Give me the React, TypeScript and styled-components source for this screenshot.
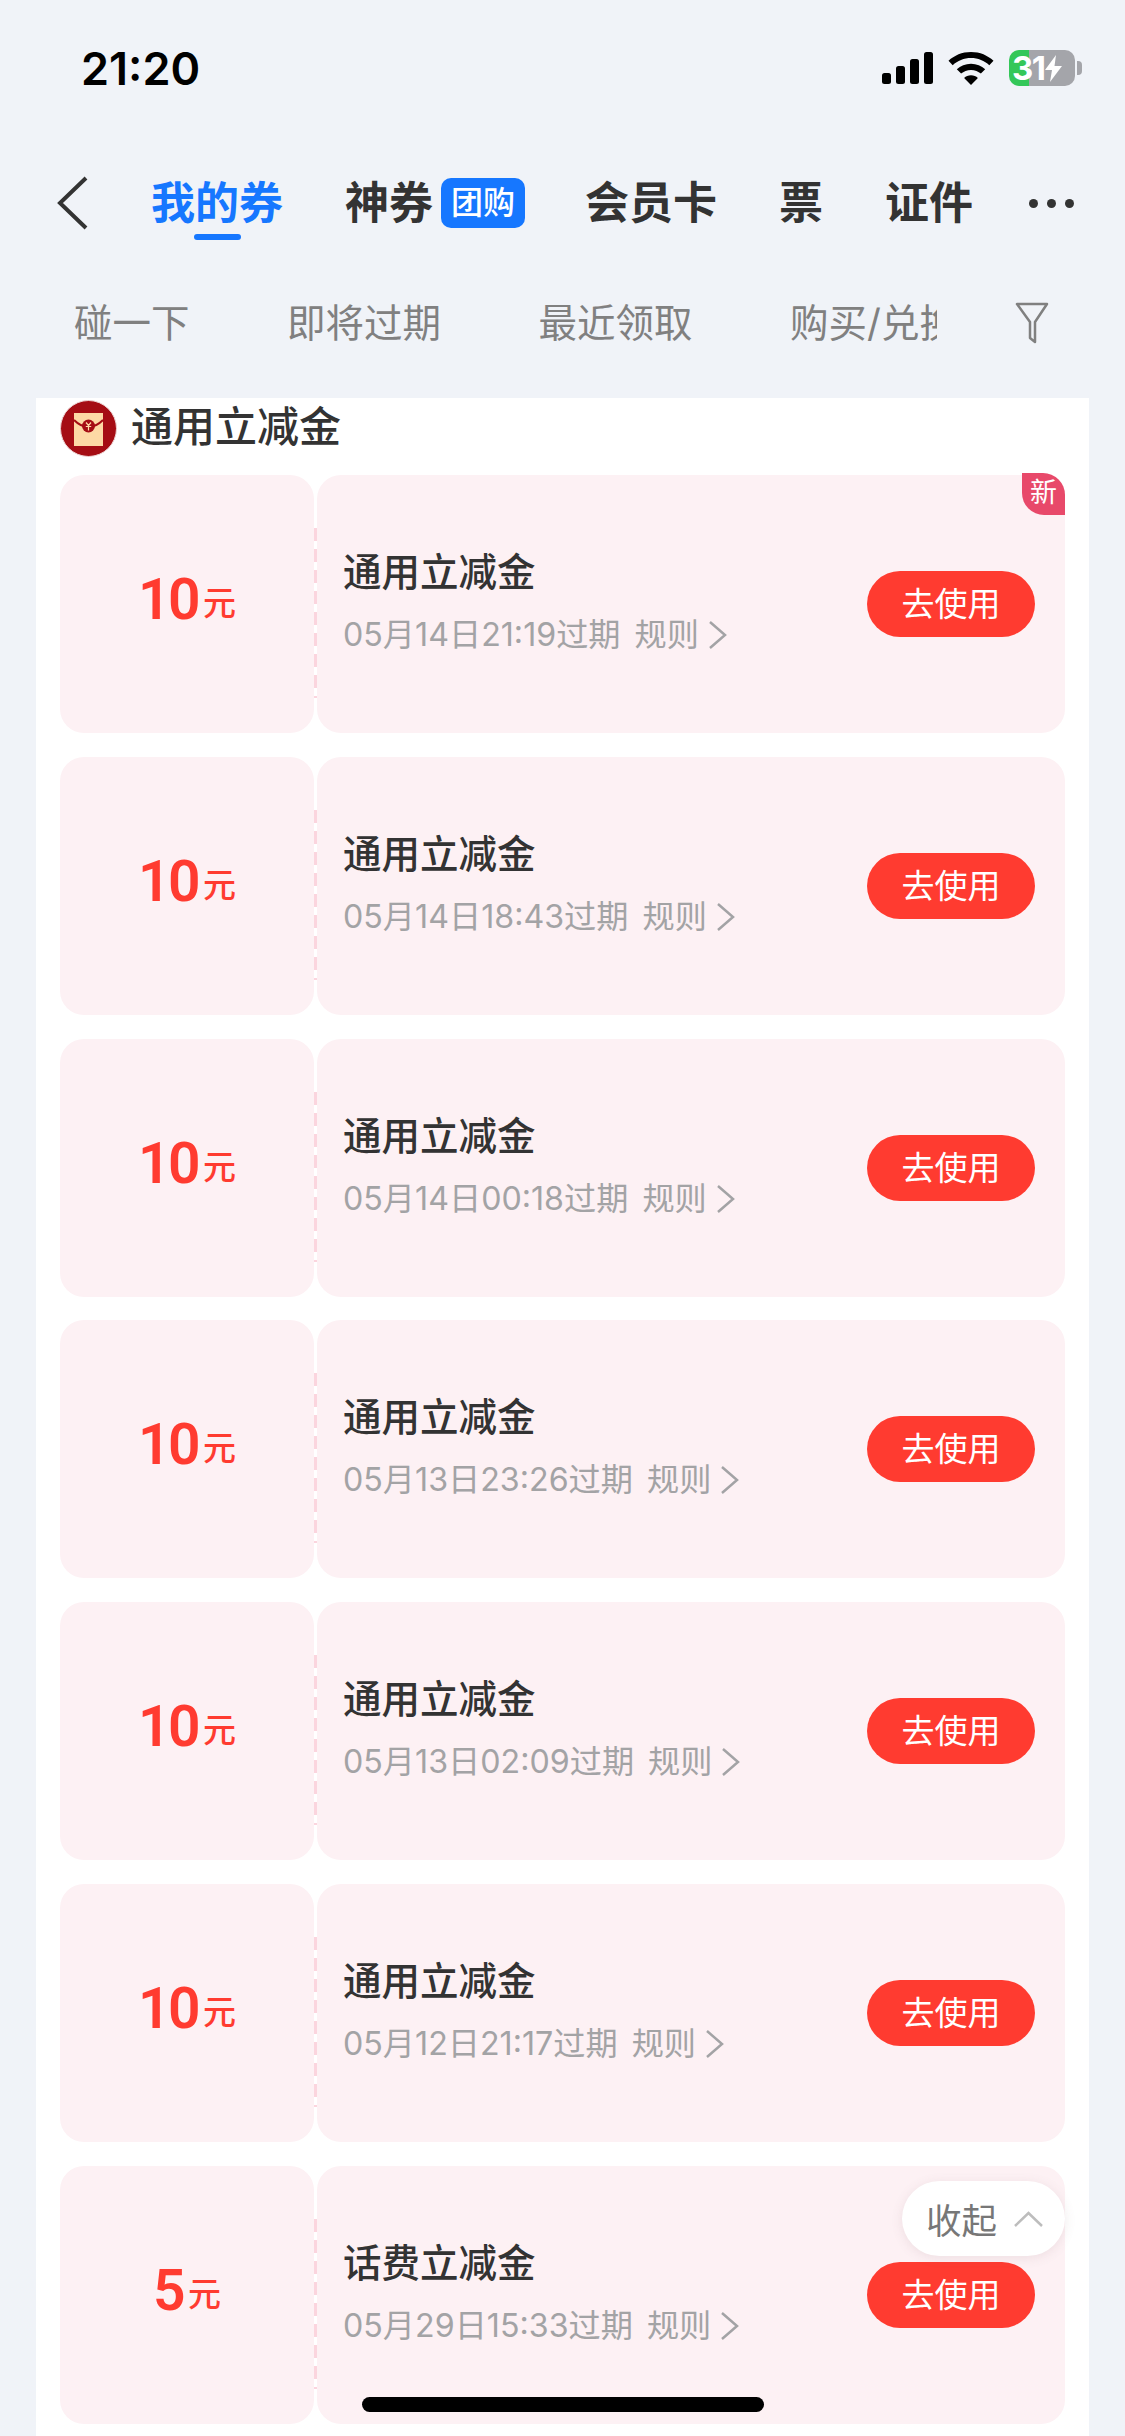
import React from 'react';
import styled, { createGlobalStyle } from 'styled-components';

const GlobalStyle = createGlobalStyle`
  html, body {
    margin: 0;
    padding: 0;
    background: #f0f3f8;
    font-family: Inter, "Noto Sans CJK SC", sans-serif;
  }
`;

const Page = styled.div`
  position: relative;
  width: 1125px;
  height: 2436px;
  overflow: hidden;
  background: #f0f3f8;
`;

const StatusBar = styled.div`
  height: 136px;
  display: flex;
  align-items: center;
  padding: 0 43px 0 81px;
  box-sizing: border-box;
`;

const Time = styled.div`
  flex: 1;
  font-size: 45px;
  font-weight: 600;
  color: #000;
`;

const StatusIcons = styled.div`
  display: flex;
  align-items: center;
  gap: 15px;
`;

const BatteryGroup = styled.div`
  display: flex;
  align-items: center;
`;

const Battery = styled.div`
  width: 66px;
  height: 36px;
  border-radius: 10px;
  display: flex;
  align-items: center;
  background: linear-gradient(90deg, #34c759 0 20px, #a4a5aa 20px);
  color: #fff;
  font-size: 33px;
  font-weight: 700;
  line-height: 36px;
  padding-left: 3px;
  box-sizing: border-box;
  letter-spacing: -1.500px;
`;

const BatteryNub = styled.div`
  width: 5px;
  height: 14px;
  margin-left: 2px;
  border-radius: 0 4px 4px 0;
  background: #a4a5aa;
`;

const Nav = styled.div`
  height: 134px;
  display: flex;
  align-items: center;
  padding-left: 56px;
`;

const BackButton = styled.div`
  display: flex;
  width: 95px;
`;

const NavTabs = styled.div`
  display: flex;
  align-items: center;
  gap: 62px;
`;

const NavTab = styled.div<{ $active?: boolean }>`
  position: relative;
  display: flex;
  align-items: center;
  font-size: 44px;
  font-weight: 700;
  line-height: 60px;
  color: ${(p) => (p.$active ? '#1677ff' : '#333')};
  ${(p) =>
    p.$active &&
    `
    &::after {
      content: "";
      position: absolute;
      left: 43px;
      bottom: -7px;
      width: 47px;
      height: 6px;
      border-radius: 3px;
      background: #1677ff;
    }
  `}
`;

const GroupBadge = styled.span`
  width: 84px;
  height: 50px;
  margin: 0 -2px 0 8px;
  border-radius: 10px;
  background: #1677ff;
  color: #fff;
  font-size: 32px;
  font-weight: 500;
  line-height: 50px;
  text-align: center;
`;

const MoreDots = styled.div`
  display: flex;
  gap: 9px;
  margin-left: -6px;
`;

const Dot = styled.span`
  width: 9px;
  height: 9px;
  border-radius: 50%;
  background: #333;
`;

const SubBar = styled.div`
  height: 106px;
  display: flex;
  align-items: center;
  padding-left: 74px;
`;

const SubTabs = styled.div`
  width: 863px;
  display: flex;
  gap: 97.500px;
  overflow: hidden;
  white-space: nowrap;
`;

const SubTab = styled.span`
  flex: none;
  font-size: 38.500px;
  line-height: 54px;
  color: #808080;
`;

const FilterButton = styled.div`
  display: flex;
  margin-left: 78px;
`;

const Panel = styled.div`
  margin: 22px 36px 0;
  padding: 0 24px;
  height: 2100px;
  background: #fff;
`;

const GroupHeader = styled.div`
  height: 77px;
  padding: 2px 0 18px;
  box-sizing: border-box;
  display: flex;
  align-items: center;
  gap: 14px;
`;

const GroupTitle = styled.div`
  font-size: 42px;
  font-weight: 500;
  line-height: 52px;
  margin-top: -3px;
  color: #333;
`;

const CardList = styled.div`
  display: flex;
  flex-direction: column;
  gap: 23.830px;
`;

const Card = styled.div`
  position: relative;
  height: 258px;
  display: grid;
  grid-template-columns: 254px 1fr;
  column-gap: 3px;
`;

const AmountCell = styled.div`
  display: flex;
  align-items: center;
  justify-content: center;
  border-radius: 24px;
  background: #fdf1f4;
  color: #ff3b30;
`;

const AmountRow = styled.div`
  display: flex;
  align-items: flex-end;
  margin-top: -8px;
`;

const AmountValue = styled.span`
  font-family: Roboto, sans-serif;
  font-size: 57px;
  font-weight: 600;
  line-height: 70px;
  letter-spacing: -2.500px;
`;

const AmountUnit = styled.span`
  font-size: 33px;
  font-weight: 500;
  line-height: 44px;
  margin: 0 0 10px 5px;
`;

const InfoCell = styled.div`
  position: relative;
  display: flex;
  align-items: center;
  justify-content: space-between;
  padding: 0 30px 0 26px;
  border-radius: 24px;
  background: #fdf1f4;

  &::before {
    content: "";
    position: absolute;
    left: -3px;
    top: 53px;
    bottom: 35px;
    width: 3px;
    background: repeating-linear-gradient(180deg, #fbd5de 0 13px, transparent 13px 21px);
  }
`;

const InfoText = styled.div`
  display: flex;
  flex-direction: column;
  gap: 15px;
  margin-top: -5px;
`;

const CardTitle = styled.div`
  font-size: 38.500px;
  font-weight: 500;
  line-height: 52px;
  color: #333;
`;

const CardMeta = styled.div`
  display: flex;
  align-items: center;
  font-size: 32.200px;
  line-height: 44px;
  color: #a3a3a5;
`;

const RuleLink = styled.span`
  display: flex;
  align-items: center;
  margin-left: 14px;
  gap: 10px;
`;

const UseButton = styled.div`
  width: 168px;
  height: 66px;
  border-radius: 33px;
  background: #ff3b30;
  color: #fff;
  font-size: 33px;
  line-height: 66px;
  text-align: center;
`;

const NewBadge = styled.div`
  position: absolute;
  top: -2px;
  right: 0;
  width: 43px;
  height: 42px;
  border-radius: 0 22px 0 22px;
  background: #e8496a;
  color: #fff;
  font-size: 27px;
  line-height: 40px;
  text-align: center;
`;

const CollapsePill = styled.div`
  position: absolute;
  left: 902px;
  top: 2181px;
  width: 163px;
  height: 75px;
  border-radius: 38px;
  background: #fff;
  box-shadow: 0 2px 12px rgba(120, 90, 100, 0.12);
  display: flex;
  align-items: center;
  padding-left: 24px;
  box-sizing: border-box;
  gap: 17px;
  color: #777;
  font-size: 35.500px;
`;

const HomeBar = styled.div`
  position: absolute;
  left: 362px;
  top: 2397px;
  width: 402px;
  height: 15px;
  border-radius: 8px;
  background: #000;
`;

const coupons = [
  { amount: '10', title: '通用立减金', expires: '05月14日21:19过期', isNew: true },
  { amount: '10', title: '通用立减金', expires: '05月14日18:43过期' },
  { amount: '10', title: '通用立减金', expires: '05月14日00:18过期' },
  { amount: '10', title: '通用立减金', expires: '05月13日23:26过期' },
  { amount: '10', title: '通用立减金', expires: '05月13日02:09过期' },
  { amount: '10', title: '通用立减金', expires: '05月12日21:17过期' },
  { amount: '5', title: '话费立减金', expires: '05月29日15:33过期' },
];

const SignalIcon = () => (
  <svg width="51" height="32" viewBox="0 0 51 32" fill="#000">
    <rect x="0" y="21" width="9" height="11" rx="2.500" />
    <rect x="14" y="14" width="9" height="18" rx="2.500" />
    <rect x="28" y="7" width="9" height="25" rx="2.500" />
    <rect x="42" y="0" width="9" height="32" rx="2.500" />
  </svg>
);

const WifiIcon = () => (
  <svg width="46" height="33" viewBox="0 0 46 33" fill="#000">
    <path d="M23 0C14 0 6.300 3.400 0.500 8.800L4.700 13.200C9.500 8.800 16 6.100 23 6.100s13.500 2.700 18.300 7.100l4.200-4.400C39.700 3.400 32 0 23 0Z" />
    <path d="M23 11.700c-5.500 0-10.500 2.100-14.200 5.500l4.300 4.400c2.600-2.300 6-3.700 9.900-3.700s7.300 1.400 9.900 3.700l4.300-4.400c-3.700-3.400-8.700-5.500-14.200-5.500Z" />
    <path d="M23 23.300c-2.700 0-5.100 1-6.900 2.700L23 33l6.900-7c-1.800-1.700-4.200-2.700-6.900-2.700Z" />
  </svg>
);

const BoltIcon = () => (
  <svg width="17" height="27" viewBox="0 0 17 27" fill="#fff">
    <path d="M11 0 0 15h7l-2 12L17 11H9.500Z" />
  </svg>
);

const BackIcon = () => (
  <svg width="32" height="54" viewBox="0 0 32 54" fill="none" stroke="#333" strokeWidth="4">
    <path d="M30 2 4 27l26 25" />
  </svg>
);

const FilterIcon = () => (
  <svg width="34" height="42" viewBox="0 0 34 42" fill="none" stroke="#808080" strokeWidth="2.500">
    <path d="M2 2h30L20 20v20l-5-4V20Z" strokeLinejoin="round" />
  </svg>
);

const EnvelopeLogo = () => (
  <svg width="57" height="57" viewBox="0 0 57 57">
    <circle cx="28.500" cy="28.500" r="28" fill="#a50d14" stroke="#ecd2d2" strokeWidth="1" />
    <rect x="14" y="13" width="29" height="33" fill="#fdd9a5" />
    <path d="M14 20c5 5 10 7 14.500 7S38 25 43 20" fill="none" stroke="#a50d14" strokeWidth="2" />
    <circle cx="28.500" cy="26" r="6.500" fill="#a50d14" />
    <path d="M26 22.500l2.500 3 2.500-3M25.800 26.500h5.400M28.500 25.500v5" fill="none" stroke="#fdd9a5" strokeWidth="1.200" />
  </svg>
);

const RuleChevron = () => (
  <svg width="18" height="28" viewBox="0 0 18 28" fill="none" stroke="#a3a3a5" strokeWidth="2.500">
    <path d="M1 1l15 13L1 27" />
  </svg>
);

const UpChevron = () => (
  <svg width="29" height="16" viewBox="0 0 29 16" fill="none" stroke="#bdbdbd" strokeWidth="2.500">
    <path d="M1 15 14.500 2 28 15" />
  </svg>
);

export default function App() {
  return (
    <Page>
      <GlobalStyle />
      <StatusBar>
        <Time>21:20</Time>
        <StatusIcons>
          <SignalIcon />
          <WifiIcon />
          <BatteryGroup>
            <Battery>
              31
              <BoltIcon />
            </Battery>
            <BatteryNub />
          </BatteryGroup>
        </StatusIcons>
      </StatusBar>

      <Nav>
        <BackButton>
          <BackIcon />
        </BackButton>
        <NavTabs>
          <NavTab $active>我的券</NavTab>
          <NavTab>
            神券<GroupBadge>团购</GroupBadge>
          </NavTab>
          <NavTab>会员卡</NavTab>
          <NavTab>票</NavTab>
          <NavTab>证件</NavTab>
          <MoreDots>
            <Dot />
            <Dot />
            <Dot />
          </MoreDots>
        </NavTabs>
      </Nav>

      <SubBar>
        <SubTabs>
          <SubTab>碰一下</SubTab>
          <SubTab>即将过期</SubTab>
          <SubTab>最近领取</SubTab>
          <SubTab>购买/兑换</SubTab>
        </SubTabs>
        <FilterButton>
          <FilterIcon />
        </FilterButton>
      </SubBar>

      <Panel>
        <GroupHeader>
          <EnvelopeLogo />
          <GroupTitle>通用立减金</GroupTitle>
        </GroupHeader>
        <CardList>
          {coupons.map((c) => (
            <Card key={c.expires}>
              <AmountCell>
                <AmountRow>
                  <AmountValue>{c.amount}</AmountValue>
                  <AmountUnit>元</AmountUnit>
                </AmountRow>
              </AmountCell>
              <InfoCell>
                <InfoText>
                  <CardTitle>{c.title}</CardTitle>
                  <CardMeta>
                    {c.expires}
                    <RuleLink>
                      规则
                      <RuleChevron />
                    </RuleLink>
                  </CardMeta>
                </InfoText>
                <UseButton>去使用</UseButton>
              </InfoCell>
              {c.isNew && <NewBadge>新</NewBadge>}
            </Card>
          ))}
        </CardList>
      </Panel>

      <CollapsePill>
        收起
        <UpChevron />
      </CollapsePill>
      <HomeBar />
    </Page>
  );
}
